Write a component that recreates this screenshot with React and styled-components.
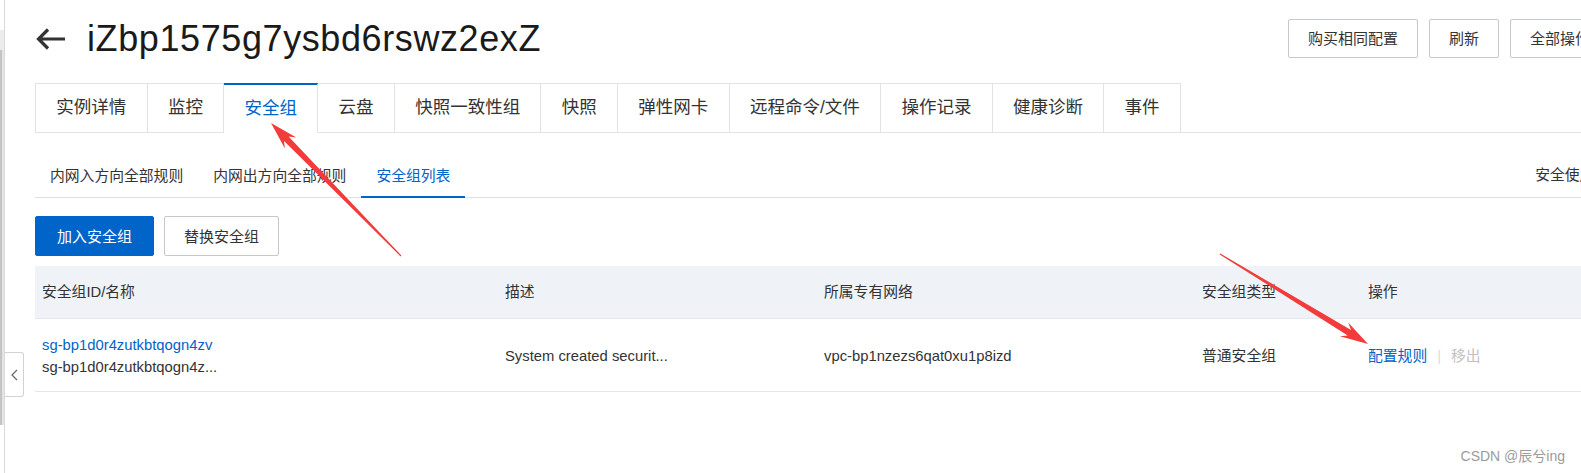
import React from "react";
import styled, { createGlobalStyle } from "styled-components";
import { ChevronDown } from "lucide-react";

const FONT = `"Liberation Sans", "Noto Sans CJK SC", sans-serif`;
const BLUE = "#0064c8";
const COLS = "463px 319px 378px 166px 1fr";

const Global = createGlobalStyle`
  *, *::before, *::after { box-sizing: border-box; }
  html, body { margin: 0; padding: 0; background: #fff; overflow: hidden; }
  body { font-family: ${FONT}; color: #333; }
  #root { width: 1581px; height: 473px; overflow: hidden; position: relative; }
  button { font-family: ${FONT}; }
`;

const Shell = styled.div`
  display: flex;
  height: 473px;
  position: relative;
`;

const Rail = styled.aside`
  width: 5px;
  flex: none;
  border-right: 1px solid #d6d9de;
  display: flex;
  flex-direction: column;
`;

const RailTrack = styled.div`
  height: ${(p) => p.$h}px;
  background: ${(p) => p.$bg};
`;

const CollapseToggle = styled.button`
  position: absolute;
  left: 5px;
  top: 352px;
  width: 19px;
  height: 45px;
  padding: 0;
  background: #fff;
  border: 1px solid #cfd2d6;
  border-left: none;
  border-radius: 0 3px 3px 0;
  display: flex;
  align-items: center;
  justify-content: center;
  cursor: pointer;
`;

const Main = styled.main`
  flex: none;
  width: 1619px;
  padding: 19px 0 0 30px;
`;

const Header = styled.header`
  display: flex;
  align-items: center;
  height: 39px;
`;

const BackButton = styled.button`
  border: 0;
  background: none;
  padding: 0;
  width: 31px;
  height: 24px;
  display: flex;
  align-items: center;
  cursor: pointer;
`;

const Title = styled.h1`
  margin: 0 0 0 21px;
  font-family: ${FONT};
  font-size: 36px;
  font-weight: 400;
  line-height: 39px;
  letter-spacing: 0.6px;
  color: #1a1a1a;
`;

const HeaderActions = styled.div`
  margin-left: auto;
  display: flex;
  gap: 11px;
`;

const OutlineButton = styled.button`
  height: ${(p) => p.$h || 39}px;
  padding: 0 ${(p) => p.$px || 19}px;
  border: 1px solid #c5c8ce;
  border-radius: 2px;
  background: #fff;
  font-size: 15px;
  line-height: 1;
  color: #333;
  display: inline-flex;
  align-items: center;
  gap: 4px;
  cursor: pointer;
`;

const PrimaryButton = styled(OutlineButton)`
  background: ${BLUE};
  border-color: ${BLUE};
  color: #fff;
`;

const TabBar = styled.nav`
  display: flex;
  margin-top: 25px;
  border-bottom: 1px solid #e3e3e3;
`;

const Tab = styled.button`
  height: 50px;
  margin-bottom: -1px;
  padding: 0 20.3px;
  background: #fff;
  border: 1px solid #e3e3e3;
  border-left: none;
  border-top: ${(p) => (p.$active ? `2px solid ${BLUE}` : "1px solid #e3e3e3")};
  border-bottom-color: ${(p) => (p.$active ? "#fff" : "#e3e3e3")};
  font-size: 17.5px;
  line-height: 1;
  color: ${(p) => (p.$active ? BLUE : "#333")};
  cursor: pointer;
  &:first-child {
    border-left: 1px solid #e3e3e3;
  }
`;

const SubTabBar = styled.div`
  display: flex;
  align-items: flex-end;
  margin-top: 22px;
  border-bottom: 1px solid #e0e0e0;
`;

const SubTab = styled.button`
  height: 42px;
  margin-bottom: -1px;
  padding: 0 15px;
  background: none;
  border: none;
  border-bottom: 2px solid ${(p) => (p.$active ? BLUE : "transparent")};
  font-size: 14.8px;
  line-height: 40px;
  color: ${(p) => (p.$active ? BLUE : "#333")};
  cursor: pointer;
`;

const SubTabAside = styled.span`
  margin-left: auto;
  height: 42px;
  line-height: 40px;
  font-size: 14.8px;
  color: #333;
  white-space: nowrap;
`;

const Toolbar = styled.div`
  display: flex;
  gap: 10px;
  margin-top: 18px;
`;

const Table = styled.div`
  margin-top: 10px;
`;

const HeadRow = styled.div`
  display: grid;
  grid-template-columns: ${COLS};
  align-items: center;
  height: 53px;
  background: #eff2f7;
  border-bottom: 1px solid #e6e8eb;
`;

const BodyRow = styled.div`
  display: grid;
  grid-template-columns: ${COLS};
  align-items: center;
  height: 73px;
  padding-top: 2px;
  border-bottom: 1px solid #e5e5e5;
`;

const Cell = styled.div`
  padding: 0 7px;
  font-size: 14.8px;
  line-height: 22px;
  color: #333;
  white-space: nowrap;
`;

const Link = styled.a`
  display: block;
  color: ${BLUE};
  text-decoration: none;
  cursor: pointer;
`;

const Muted = styled.span`
  display: block;
  color: #333;
`;

const Actions = styled.div`
  display: flex;
  align-items: center;
`;

const Action = styled.a`
  color: ${(p) => (p.$disabled ? "#c2c2c2" : BLUE)};
  text-decoration: none;
  cursor: ${(p) => (p.$disabled ? "not-allowed" : "pointer")};
`;

const Divider = styled.span`
  margin: 0 10px;
  color: #dcdcdc;
`;

const Watermark = styled.div`
  position: absolute;
  right: 16px;
  top: 448px;
  font-size: 14px;
  line-height: 16px;
  color: #9b9b9b;
  white-space: nowrap;
`;

const Annotation = styled.svg`
  position: absolute;
  left: 0;
  top: 0;
  width: 1581px;
  height: 473px;
  pointer-events: none;
`;

function arrowPoints([tx, ty], [px, py], head = 28, headHalf = 8, neckHalf = 3.2, tailHalf = 0.6) {
  const dx = px - tx;
  const dy = py - ty;
  const len = Math.hypot(dx, dy);
  const ux = dx / len;
  const uy = dy / len;
  const nx = -uy;
  const ny = ux;
  const bx = px - ux * head;
  const by = py - uy * head;
  const kx = px - ux * head * 0.78;
  const ky = py - uy * head * 0.78;
  const pts = [
    [tx + nx * tailHalf, ty + ny * tailHalf],
    [kx + nx * neckHalf, ky + ny * neckHalf],
    [bx + nx * headHalf, by + ny * headHalf],
    [px, py],
    [bx - nx * headHalf, by - ny * headHalf],
    [kx - nx * neckHalf, ky - ny * neckHalf],
    [tx - nx * tailHalf, ty - ny * tailHalf],
  ];
  return pts.map((p) => p.map((v) => v.toFixed(1)).join(",")).join(" ");
}

const tabs = ["实例详情", "监控", "安全组", "云盘", "快照一致性组", "快照", "弹性网卡", "远程命令/文件", "操作记录", "健康诊断", "事件"];
const subTabs = ["内网入方向全部规则", "内网出方向全部规则", "安全组列表"];
const columns = ["安全组ID/名称", "描述", "所属专有网络", "安全组类型", "操作"];
const groups = [
  {
    id: "sg-bp1d0r4zutkbtqogn4zv",
    name: "sg-bp1d0r4zutkbtqogn4z...",
    desc: "System created securit...",
    vpc: "vpc-bp1nzezs6qat0xu1p8izd",
    type: "普通安全组",
  },
];

export default function App() {
  return (
    <>
      <Global />
      <Shell>
        <Rail>
          <RailTrack $h={30} $bg="#fff" />
          <RailTrack $h={20} $bg="#ececec" />
          <RailTrack $h={375} $bg="linear-gradient(to right, #c4c4c4 0 2px, #e4e4e4 2px 5px)" />
        </Rail>
        <CollapseToggle aria-label="收起">
          <svg width="7" height="12" viewBox="0 0 7 12">
            <path d="M6 1 1 6l5 5" fill="none" stroke="#666" strokeWidth="1.2" />
          </svg>
        </CollapseToggle>
        <Main>
          <Header>
            <BackButton aria-label="返回">
              <svg width="31" height="24" viewBox="0 0 31 24">
                <path d="M30 12H3.5M13 2.5 3.5 12l9.5 9.5" fill="none" stroke="#333" strokeWidth="3.2" />
              </svg>
            </BackButton>
            <Title>iZbp1575g7ysbd6rswz2exZ</Title>
            <HeaderActions>
              <OutlineButton>购买相同配置</OutlineButton>
              <OutlineButton>刷新</OutlineButton>
              <OutlineButton>
                全部操作
                <ChevronDown size={10} strokeWidth={2} />
              </OutlineButton>
            </HeaderActions>
          </Header>

          <TabBar>
            {tabs.map((t) => (
              <Tab key={t} $active={t === "安全组"}>
                {t}
              </Tab>
            ))}
          </TabBar>

          <SubTabBar>
            {subTabs.map((t) => (
              <SubTab key={t} $active={t === "安全组列表"}>
                {t}
              </SubTab>
            ))}
            <SubTabAside>安全使用建议</SubTabAside>
          </SubTabBar>

          <Toolbar>
            <PrimaryButton $h={40} $px={21}>加入安全组</PrimaryButton>
            <OutlineButton $h={40} $px={19}>替换安全组</OutlineButton>
          </Toolbar>

          <Table>
            <HeadRow>
              {columns.map((c) => (
                <Cell key={c}>{c}</Cell>
              ))}
            </HeadRow>
            {groups.map((g) => (
              <BodyRow key={g.id}>
                <Cell>
                  <Link>{g.id}</Link>
                  <Muted>{g.name}</Muted>
                </Cell>
                <Cell>{g.desc}</Cell>
                <Cell>{g.vpc}</Cell>
                <Cell>{g.type}</Cell>
                <Cell>
                  <Actions>
                    <Action>配置规则</Action>
                    <Divider>|</Divider>
                    <Action $disabled>移出</Action>
                  </Actions>
                </Cell>
              </BodyRow>
            ))}
          </Table>
        </Main>
        <Annotation viewBox="0 0 1581 473">
          <polygon points={arrowPoints([401, 256], [271, 123])} fill="#f23b3b" />
          <polygon points={arrowPoints([1220, 254], [1368, 344])} fill="#f23b3b" />
        </Annotation>
        <Watermark>CSDN @辰兮ing</Watermark>
      </Shell>
    </>
  );
}
